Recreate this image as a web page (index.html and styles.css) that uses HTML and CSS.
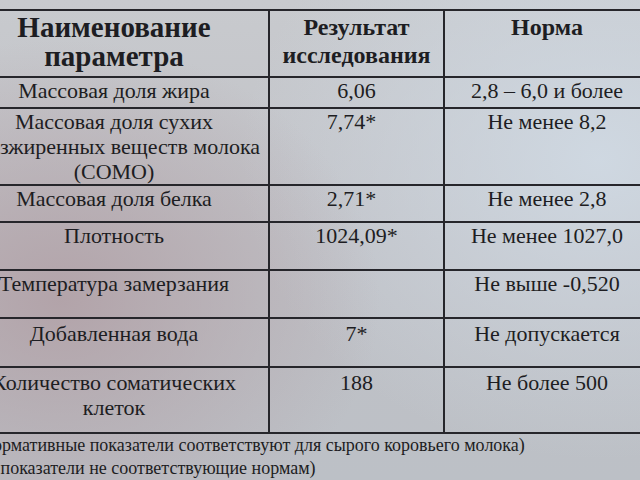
FILE: index.html
```html
<!DOCTYPE html>
<html>
<head>
<meta charset="utf-8">
<title>Показатели молока</title>
<link rel="stylesheet" href="styles.css">
</head>
<body>
<div class="sheet">
  <table class="report">
    <colgroup>
      <col class="c-name">
      <col class="c-result">
      <col class="c-norm">
    </colgroup>
    <thead>
      <tr class="r-head">
        <th class="cell h-name">Наименование<br>параметра</th>
        <th class="cell h-small">Результат<br>исследования</th>
        <th class="cell h-small">Норма</th>
      </tr>
    </thead>
    <tbody>
      <tr class="r1"><td class="cell">Массовая доля жира</td><td class="cell val">6,06</td><td class="cell">2,8 – 6,0 и более</td></tr>
      <tr class="r2"><td class="cell">Массовая доля сухих<br>обезжиренных веществ молока<br>(СОМО)</td><td class="cell val shift">7,74*</td><td class="cell">Не менее 8,2</td></tr>
      <tr class="r3"><td class="cell">Массовая доля белка</td><td class="cell val shift">2,71*</td><td class="cell">Не менее 2,8</td></tr>
      <tr class="r4"><td class="cell">Плотность</td><td class="cell val">1024,09*</td><td class="cell">Не менее 1027,0</td></tr>
      <tr class="r5"><td class="cell">Температура замерзания</td><td class="cell val"></td><td class="cell">Не выше -0,520</td></tr>
      <tr class="r6"><td class="cell">Добавленная вода</td><td class="cell val">7*</td><td class="cell">Не допускается</td></tr>
      <tr class="r7"><td class="cell">Количество соматических<br>клеток</td><td class="cell val">188</td><td class="cell">Не более 500</td></tr>
    </tbody>
  </table>
  <div class="notes">
    <p class="note n1">(Нормативные показатели соответствуют для сырого коровьего молока)</p>
    <p class="note n2">(* показатели не соответствующие нормам)</p>
  </div>
</div>
</body>
</html>
```
FILE: styles.css
```css
html, body {
  margin: 0;
  padding: 0;
}
body {
  width: 640px;
  height: 480px;
  overflow: hidden;
  color: #1d1d22;
  background:
    radial-gradient(ellipse 320px 260px at 60px 300px, rgba(176, 158, 164, 0.85), rgba(176, 158, 164, 0) 100%),
    radial-gradient(ellipse 360px 300px at 600px 160px, rgba(208, 218, 228, 0.9), rgba(208, 218, 228, 0) 100%),
    linear-gradient(180deg, #c8cace 0%, #c0c1c6 50%, #bcc0c6 100%);
}
.sheet {
  font-family: "Liberation Serif", "Times New Roman", serif;
  padding-top: 9px;
  margin-left: -42px;
  width: 700px;
}
.report {
  border-collapse: collapse;
  table-layout: fixed;
  width: 691px;
}
.c-name { width: 310px; }
.c-result { width: 175px; }
.c-norm { width: 206px; }
.cell {
  font-family: "Liberation Serif", "Times New Roman", serif;
  border: 2px solid #26262b;
  text-align: center;
  vertical-align: top;
  padding: 0 2px;
  font-size: 22px;
  line-height: 25px;
  font-weight: normal;
  color: #1d1d22;
}
.r-head .cell {
  font-weight: bold;
}
.r-head .h-name {
  font-size: 29px;
  line-height: 29px;
  padding-top: 2px;
  height: 63px;
}
.r-head .h-small {
  font-size: 24px;
  line-height: 28px;
  padding-top: 2px;
}
.r1 .cell { height: 29px; }
.r2 .cell { height: 74px; }
.r3 .cell { height: 35px; }
.r4 .cell { height: 46px; }
.r5 .cell { height: 46px; }
.r6 .cell { height: 45px; padding-top: 2px; }
.r7 .cell { height: 62px; padding-top: 2px; }
.val.shift { padding-right: 12px; }
.notes {
  padding-top: 0;
}
.note {
  font-family: "Liberation Serif", "Times New Roman", serif;
  font-size: 18px;
  line-height: 23px;
  margin: 0;
  white-space: nowrap;
  color: #1d1d22;
}
.n1 { padding-left: 16px; }
.n2 { padding-left: 23px; }
```
